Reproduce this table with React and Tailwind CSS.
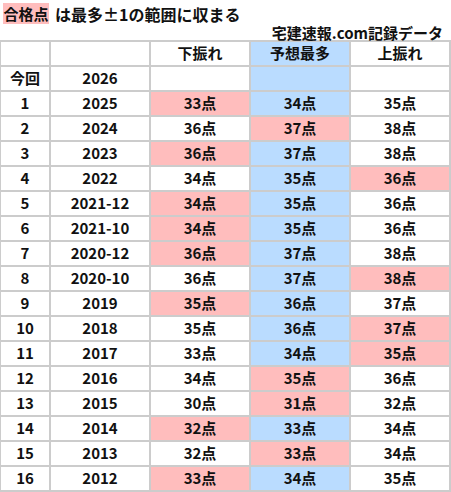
import React from 'react';

const PINK = 'bg-[#ffbdbd]';
const BLUE = 'bg-[#badcff]';

// [no, year, low, mid, high, highlighted column: 0 low / 1 mid / 2 high]
const rows = [
  ['1', '2025', 33, 34, 35, 0],
  ['2', '2024', 36, 37, 38, 1],
  ['3', '2023', 36, 37, 38, 0],
  ['4', '2022', 34, 35, 36, 2],
  ['5', '2021-12', 34, 35, 36, 0],
  ['6', '2021-10', 34, 35, 36, 0],
  ['7', '2020-12', 36, 37, 38, 0],
  ['8', '2020-10', 36, 37, 38, 2],
  ['9', '2019', 35, 36, 37, 0],
  ['10', '2018', 35, 36, 37, 2],
  ['11', '2017', 33, 34, 35, 2],
  ['12', '2016', 34, 35, 36, 1],
  ['13', '2015', 30, 31, 32, 1],
  ['14', '2014', 32, 33, 34, 0],
  ['15', '2013', 32, 33, 34, 1],
  ['16', '2012', 33, 34, 35, 0],
];

function Cell({ children, className = '' }) {
  return (
    <div className={`flex items-center justify-center h-[23px] text-[15px] font-bold text-[#111] ${className}`}>
      {children}
    </div>
  );
}

export default function App() {
  return (
    <div
      className="w-[451px] h-[492px] bg-white overflow-hidden"
      style={{ fontFamily: '"Noto Sans CJK JP", "Noto Sans", sans-serif' }}
    >
      <div className="flex items-center h-[26px] pl-[3px] pt-[1px]">
        <span className={`${PINK} w-[46px] h-[21px] flex items-center justify-center text-[15px] font-bold text-[#111] leading-none`}>合格点</span>
        <span className="ml-[6px] text-[16px] font-bold text-[#111] leading-none">は最多±1の範囲に収まる</span>
      </div>
      <div className="flex justify-end h-[14px] pr-[8px] text-[15px] font-bold text-[#111] leading-[14px]">
        宅建速報.com記録データ
      </div>
      <div className="grid grid-cols-[48px_98px_98px_98px_98px] gap-[2px] bg-[#cccccc] pl-[1px] pr-[2px] pt-[2px] pb-[2px]">
        <Cell className="bg-white" />
        <Cell className="bg-white" />
        <Cell className="bg-white">下振れ</Cell>
        <Cell className={BLUE}>予想最多</Cell>
        <Cell className="bg-white">上振れ</Cell>

        <Cell className="bg-white">今回</Cell>
        <Cell className="bg-white">2026</Cell>
        <Cell className="bg-white" />
        <Cell className={BLUE} />
        <Cell className="bg-white" />

        {rows.map(([no, year, lo, mid, hi, hl]) => (
          <React.Fragment key={no}>
            <Cell className="bg-white">{no}</Cell>
            <Cell className="bg-white">{year}</Cell>
            <Cell className={hl === 0 ? PINK : 'bg-white'}>{lo}点</Cell>
            <Cell className={hl === 1 ? PINK : BLUE}>{mid}点</Cell>
            <Cell className={hl === 2 ? PINK : 'bg-white'}>{hi}点</Cell>
          </React.Fragment>
        ))}
      </div>
    </div>
  );
}
